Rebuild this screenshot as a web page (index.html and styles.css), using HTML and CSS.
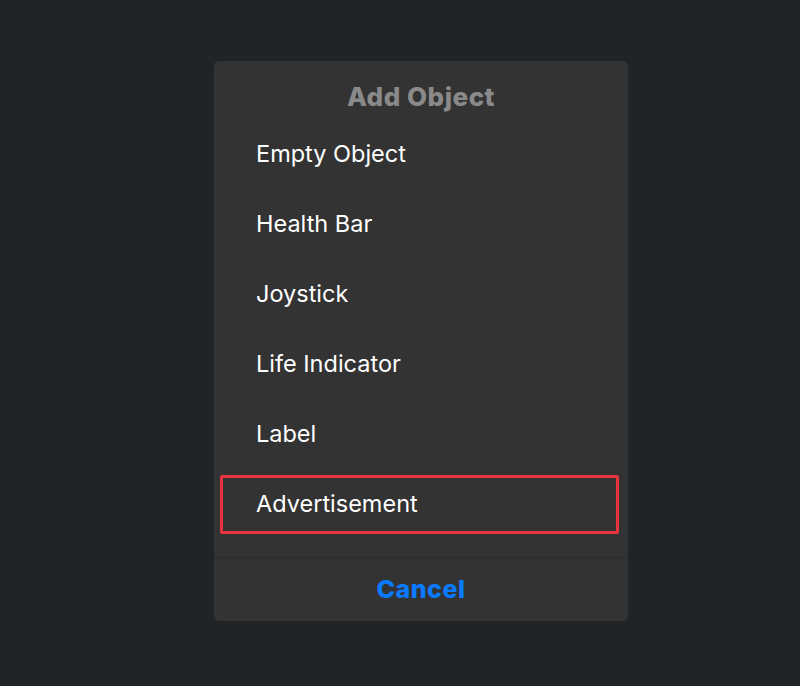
FILE: index.html
```html
<!DOCTYPE html>
<html>
<head>
<meta charset="utf-8">
<link rel="stylesheet" href="styles.css">
</head>
<body>
<div class="screen">
  <div class="dialog">
    <div class="header"><span class="title">Add Object</span></div>
    <div class="list">
      <div class="item"><span>Empty Object</span></div>
      <div class="item"><span>Health Bar</span></div>
      <div class="item"><span>Joystick</span></div>
      <div class="item"><span>Life Indicator</span></div>
      <div class="item"><span>Label</span></div>
      <div class="item highlight"><span>Advertisement</span></div>
    </div>
    <div class="footer"><span class="cancel">Cancel</span></div>
  </div>
</div>
</body>
</html>
```

FILE: styles.css
```css
html, body {
  margin: 0;
  padding: 0;
  background: #212427;
}
.screen {
  width: 800px;
  height: 686px;
  display: flex;
  padding-top: 61px;
  padding-left: 214px;
  box-sizing: border-box;
}
.dialog {
  width: 414px;
  height: 560px;
  background: #333333;
  border-radius: 5px;
  display: flex;
  flex-direction: column;
}
.header {
  height: 58px;
  box-sizing: border-box;
  padding-top: 19px;
  text-align: center;
}
.title {
  font-family: "Inter", sans-serif;
  font-weight: 800;
  font-size: 26px;
  line-height: 34px;
  color: #8a8a8a;
  letter-spacing: 0.5px;
}
.list {
  padding-bottom: 18px;
  border-bottom: 1px solid #2b2b2b;
}
.item {
  height: 70px;
  display: flex;
  align-items: center;
  padding-left: 42px;
  padding-bottom: 2px;
  font-family: "Inter", sans-serif;
  font-size: 23.5px;
  color: #ffffff;
  box-sizing: border-box;
}
.item.highlight {
  height: 59px;
  margin: 6px 9px 5px 6px;
  padding-left: 33px;
  border: 3px solid #e8343f;
  border-radius: 2px;
}
.footer {
  flex: 1;
  display: flex;
  align-items: center;
  justify-content: center;
  padding-bottom: 2px;
}
.cancel {
  font-family: "Inter", sans-serif;
  font-weight: 800;
  font-size: 25px;
  letter-spacing: 0.5px;
  color: #0a7aff;
}
```
